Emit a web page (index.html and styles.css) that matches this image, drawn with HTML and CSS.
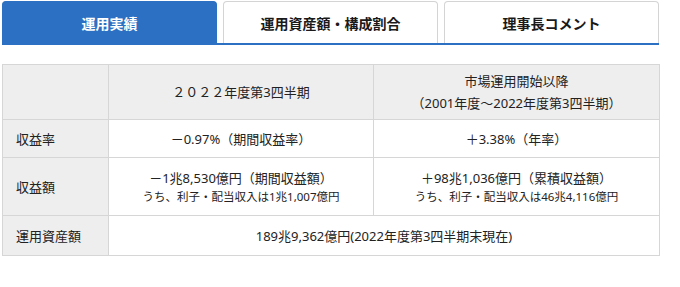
FILE: index.html
```html
<!DOCTYPE html>
<html lang="ja">
<head>
<meta charset="utf-8">
<link rel="stylesheet" href="styles.css">
</head>
<body>
<div class="wrap">
  <div class="tabs">
    <div class="tab active">運用実績</div>
    <div class="tab">運用資産額・構成割合</div>
    <div class="tab">理事長コメント</div>
  </div>
  <table class="perf">
    <colgroup><col class="c1"><col class="c2"><col class="c3"></colgroup>
    <tr class="head">
      <th></th>
      <th>２０２２年度第3四半期</th>
      <th>市場運用開始以降<br>（2001年度～2022年度第3四半期）</th>
    </tr>
    <tr class="r1">
      <th>収益率</th>
      <td>－0.97%（期間収益率）</td>
      <td>＋3.38%（年率）</td>
    </tr>
    <tr class="r2">
      <th>収益額</th>
      <td>－1兆8,530億円（期間収益額）<span class="sub">うち、利子・配当収入は1兆1,007億円</span></td>
      <td>＋98兆1,036億円（累積収益額）<span class="sub">うち、利子・配当収入は46兆4,116億円</span></td>
    </tr>
    <tr class="r3">
      <th>運用資産額</th>
      <td colspan="2">189兆9,362億円(2022年度第3四半期末現在)</td>
    </tr>
  </table>
</div>
</body>
</html>
```
FILE: styles.css
```css
html, body { margin: 0; padding: 0; background: #fff; }
body {
  font-family: "Noto Sans", "Noto Sans CJK JP", sans-serif;
  color: #222;
}
.wrap { width: 657px; padding: 1px 0 0 2px; }
.tabs {
  display: flex;
  gap: 6px;
  border-bottom: 2px solid #2b70c2;
}
.tab {
  flex: 1;
  height: 42px;
  box-sizing: border-box;
  border: 1px solid #d4d4d4;
  border-bottom: none;
  border-radius: 4px 4px 0 0;
  display: flex;
  align-items: center;
  justify-content: center;
  font-size: 14px;
  font-weight: bold;
  color: #1a1a1a;
  background: #fff;
}
.tab.active {
  background: #2b70c2;
  border-color: #2b70c2;
  color: #fff;
}
.perf {
  margin-top: 19px;
  width: 657px;
  border-collapse: collapse;
  table-layout: fixed;
  font-size: 13px;
}
.c1 { width: 106px; }
.c2 { width: 265px; }
.c3 { width: 286px; }
.perf th, .perf td {
  border: 1px solid #d6d6d6;
  font-weight: normal;
  text-align: center;
  padding: 0;
  line-height: 20px;
}
.perf th { background: #eeeeee; text-align: left; padding-left: 13px; }
.perf tr.head th { text-align: center; padding-left: 0; line-height: 22px; }
.perf tr.head { height: 55px; }
.r1 { height: 38px; }
.r2 { height: 58px; }
.r3 { height: 40px; }
.sub { display: block; font-size: 11.5px; line-height: 18px; }
```
